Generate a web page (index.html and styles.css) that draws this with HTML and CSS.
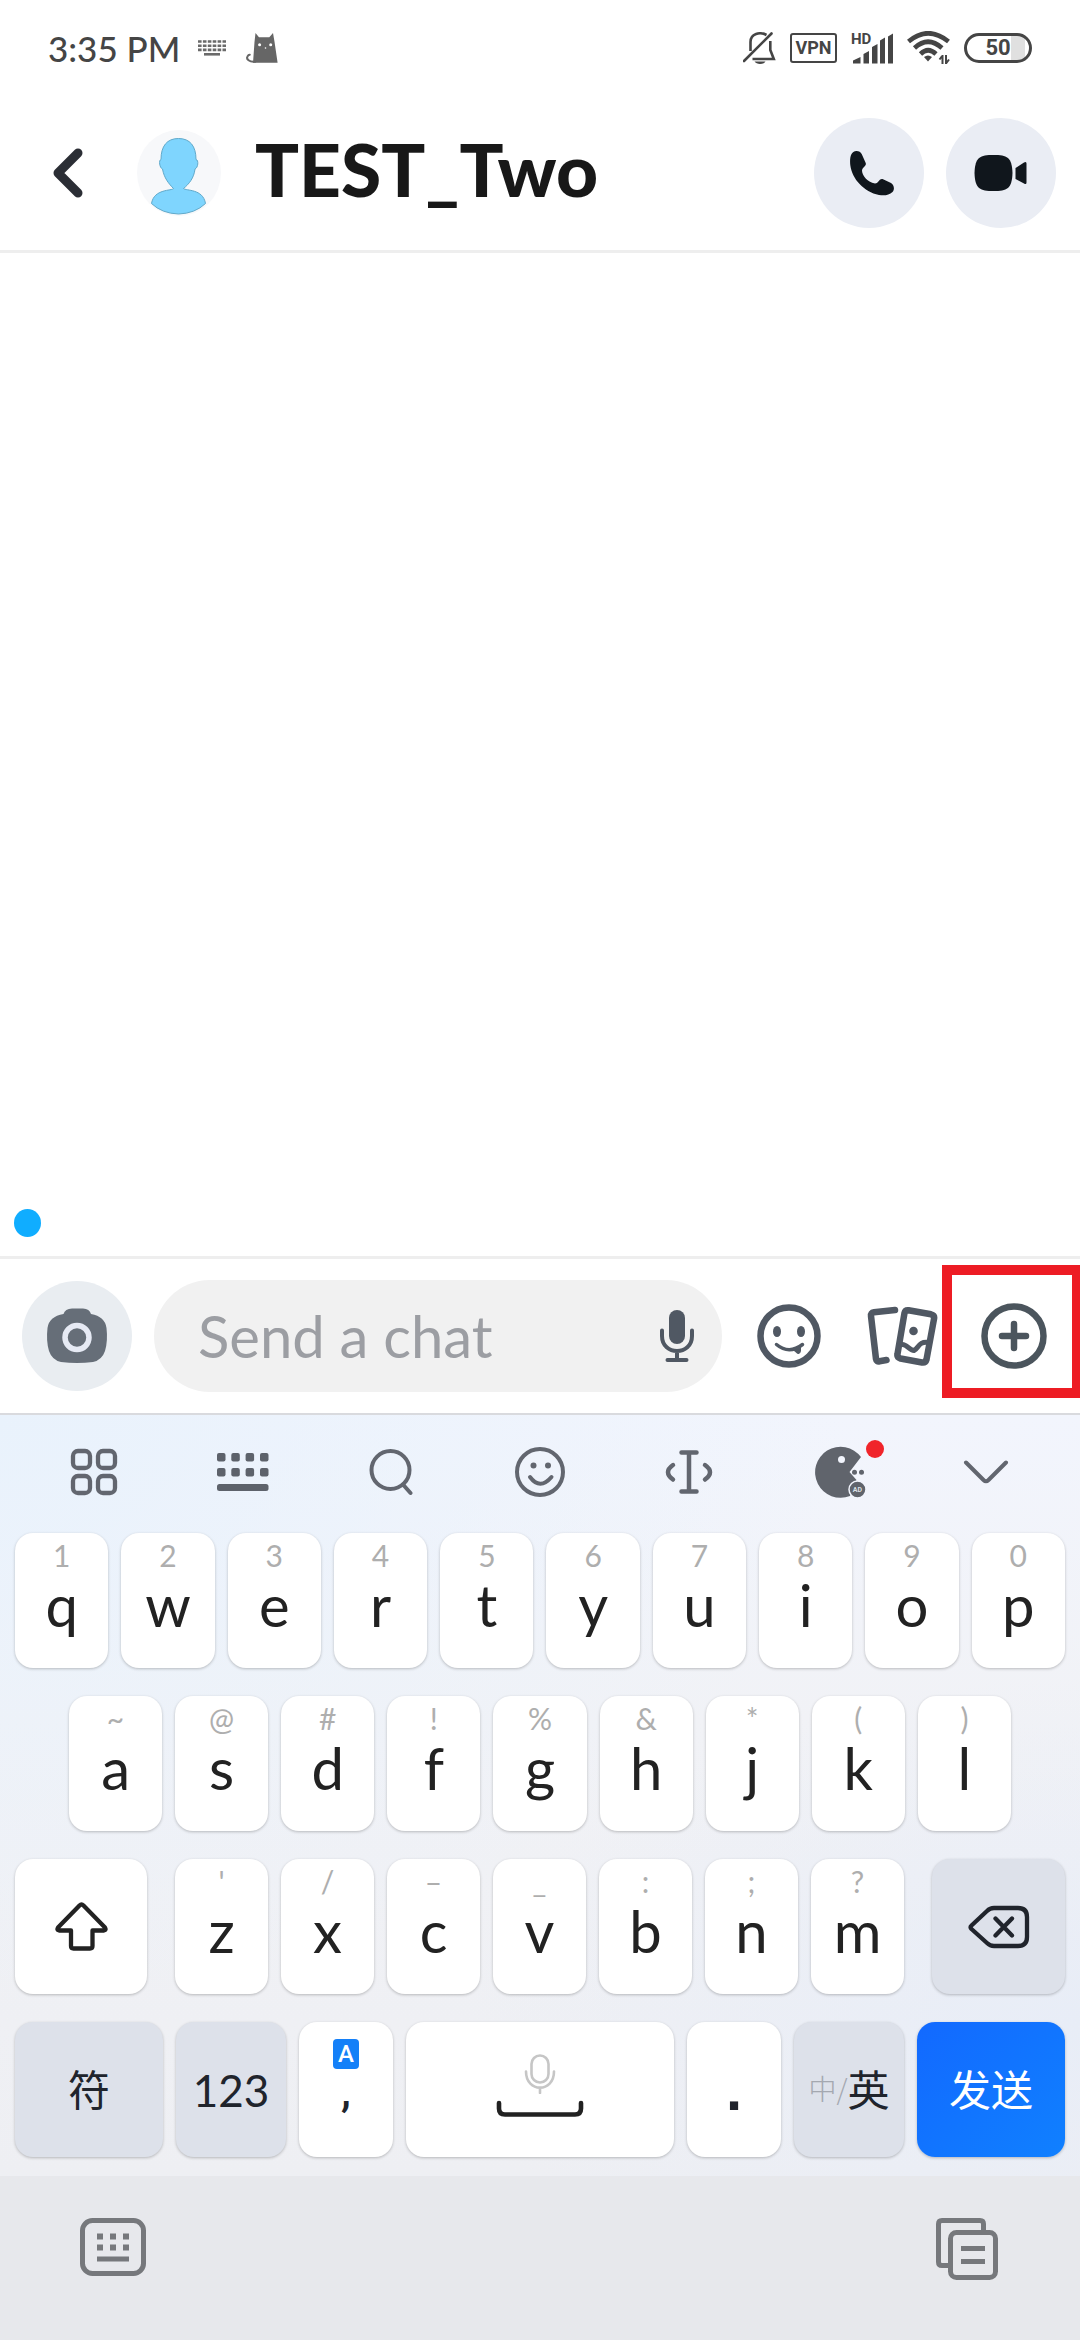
FILE: index.html
```html
<!DOCTYPE html>
<html lang="en">
<head>
<meta charset="utf-8">
<meta name="viewport" content="width=device-width, initial-scale=1">
<title>TEST_Two</title>
<link rel="stylesheet" href="styles.css">
</head>
<body>
<div class="screen">
  <div class="status">
    <span class="status-time">3:35 PM</span>
    <svg class="status-kb" width="28" height="16" viewBox="0 0 28 16" fill="none" stroke="#6a6a6a" stroke-width="2.6"><path d="M0 1.5h28M0 5.7h28M0 9.9h28" stroke-dasharray="3.6 1.3"/><path d="M6 14.3h16"/></svg>
    <svg class="status-cat" width="33" height="31" viewBox="0 0 33 31"><path d="M9.5 0 13 4.3H23.300L27 0l1.500 8.700L31.600 29.700H7L8.500 9z" fill="#666"/><path d="M10 28.500C3 29.500 0 26 1.500 23.500 2.500 21.500 4 21.800 4.500 22" fill="none" stroke="#666" stroke-width="2"/><circle cx="13.600" cy="11.700" r="1.500" fill="#fff"/><circle cx="24.700" cy="11.700" r="1.500" fill="#fff"/><circle cx="19.500" cy="15" r=".8" fill="#fff"/></svg>
    <div class="status-right">
      <svg width="33" height="33" viewBox="0 0 33 33" fill="none" stroke="#454545" stroke-width="2.600"><path d="M1 29 28.500 1.500" stroke-linecap="round"/><path d="M7.500 19V10C7.500 1.500 17-.5 23.500 3M27.300 9v9l3.500 9H9.500"/><path d="M11.500 29.500h11C20.500 32.800 13.500 32.800 11.500 29.500z" fill="#454545" stroke="none"/></svg>
      <span class="vpn">VPN</span>
      <span class="signal"><span class="hd">HD</span>
        <svg width="42" height="31" viewBox="0 0 42 31" fill="#454545"><path d="M2 27.500 9.500 24v6.500H2zM12.500 21 18 18v12.500h-5.500zM21 14l5.500-3v19.500H21zM29 7.500l5-3v26h-5zM37 3.500 42 .5v30h-5z"/></svg>
      </span>
      <svg width="43" height="34" viewBox="0 0 43 34"><g fill="none" stroke="#454545" stroke-width="4.600"><path d="M1.500 10.500Q21-6 41.500 10.500"/><path d="M7.500 17Q21 4.500 35 17"/><path d="M13.500 23Q21 15.500 29 23"/></g><path d="M17 26Q21 23 25 26L21 30.500z" fill="#454545"/><path d="M35.500 24v9M39 33v-9M35.500 24.500l-3 4M39 32.500l3-4" fill="none" stroke="#454545" stroke-width="2"/></svg>
      <span class="battery">50</span>
    </div>
  </div>

  <header class="header">
    <button class="back" aria-label="Back"><svg width="30" height="50" viewBox="0 0 30 50"><path d="M25 5 5 25l20 20" fill="none" stroke="#2b2e35" stroke-width="9" stroke-linecap="round" stroke-linejoin="round"/></svg></button>
    <svg class="avatar" width="84" height="86" viewBox="0 0 84 86"><ellipse cx="42" cy="43" rx="42" ry="43" fill="#f7f8fa"/><path d="M41.500 8.500C30 8.500 24 16 24 29.500 21.500 30 22.500 38 25.500 39 27 48 32 54 36.500 58.500 35 61 17 58.500 14.500 73.500Q25 83.500 41.500 84 58 83.500 68.500 73.500C66 58.500 49 61 46.500 58.500 52 54 57 48 58 39 61 38 62 30 59 29.500 59 16 53 8.500 41.500 8.500z" fill="#7fd5fe" stroke="#60a9ca"/></svg>
    <h1 class="title">TEST_Two</h1>
    <button class="round call" aria-label="Call"><svg width="45" height="45" viewBox="0 0 45 45" fill="#10161c"><path d="M6.500 0C9 0 10.700 1 11.700 3L15.700 12C16.800 15 12.300 16 12 19.500 12 24 17 31 25 32.500 29 32.500 28.500 27.500 32.500 28L41 32C44 34 45 38 42.500 41 39 44.500 34 44.800 29 44 14 41 2 28 .3 14.300-.4 8 .3 0 6.500 0z"/></svg></button>
    <button class="round" aria-label="Video call"><svg width="54" height="38" viewBox="0 0 54 38" fill="#10161c"><path d="M19.500 1C33 1 38 3 38.500 19 38 35 33 37 19.500 37S1 35 .5 19C1 3 6 1 19.500 1z"/><path d="M41.500 14 50 8.500q2.500-1.500 2.500 1v19q0 2.500-2.500 1L41.500 25z"/></svg></button>
  </header>

  <main class="chat"><span class="dot"></span></main>

  <form class="composer">
    <button type="button" class="round camera" aria-label="Camera"><svg width="62" height="56" viewBox="0 0 62 56"><path d="M17.500 6Q19 .8 26 .5H37Q43.500.8 45 6 59 8.500 60.500 20 62 33 59 43 56 52 47 54 31 56 15 54 6 52 3 43 0 33 1.500 20 3 8.500 17.500 6z" fill="#666e78"/><circle cx="31" cy="29.500" r="12" fill="none" stroke="#e6eaf4" stroke-width="5.500"/></svg></button>
    <div class="field">
      <input type="text" placeholder="Send a chat" aria-label="Send a chat">
      <button type="button" class="plain" aria-label="Voice"><svg width="36" height="54" viewBox="0 0 36 54"><rect x="10" y="1" width="16" height="34" rx="8" fill="#505863"/><path d="M3 21.500V27c0 20 30 20 30 0v-5.500M18 42v8.500M8.500 51h19" fill="none" stroke="#505863" stroke-width="4" stroke-linecap="round"/></svg></button>
    </div>
    <button type="button" class="plain" aria-label="Stickers"><svg width="64" height="64" viewBox="0 0 64 64" fill="#505863"><circle cx="32" cy="32" r="28.500" fill="none" stroke="#505863" stroke-width="6.500"/><ellipse cx="20" cy="27.500" rx="4" ry="5.500"/><ellipse cx="44" cy="27.500" rx="4" ry="5.500"/><path d="M19.500 40.500Q32 51 45.500 40.500" fill="none" stroke="#505863" stroke-width="3.500" stroke-linecap="round"/><path d="M36 46 44 42v5q-1 4.500-4 2.500z"/></svg></button>
    <button type="button" class="plain cards" aria-label="Memories"><svg width="72" height="60" viewBox="0 0 72 60" fill="none" stroke="#505863" stroke-width="6.500" stroke-linecap="round" stroke-linejoin="round"><path d="M28 4 7 6.300Q3.500 6.800 4 10L9 53q.5 3 3.500 2.300L19.500 54"/><path d="M41.500 4.300 64 8.300Q67.800 9.300 67 13L59.500 53.500Q58.500 57 55 56.500L33.500 52.500Q29.800 51.500 30.500 48L37.500 7Q38.200 4 41.500 4.300z"/><path d="M35 38.500C40 38 42 44.500 47 44.500 52 42 51 35 62 36.500" stroke-width="5"/><circle cx="46.500" cy="25" r="4.300" fill="#505863" stroke="none"/></svg></button>
    <button type="button" class="plain plus" aria-label="More"><svg width="66" height="66" viewBox="0 0 66 66" fill="none" stroke="#4b555d" stroke-width="6.500" stroke-linecap="round"><circle cx="33" cy="33" r="29.500"/><path d="M33 21v24M21 33h24"/></svg></button>
  </form>

  <section class="keyboard">
    <div class="tools">
      <button class="plain" aria-label="Menu"><svg width="48" height="48" viewBox="0 0 48 48" fill="none" stroke="#62666f" stroke-width="4.300"><rect x="3" y="3" width="17" height="17" rx="5"/><rect x="28" y="3" width="17" height="17" rx="5"/><rect x="3" y="28" width="17" height="17" rx="5"/><rect x="28" y="28" width="17" height="17" rx="5"/></svg></button>
      <button class="plain" aria-label="Layout"><svg width="52" height="38" viewBox="0 0 52 38" fill="#5d626b"><rect width="8.500" height="8.500" rx="2"/><rect x="14.300" width="8.500" height="8.500" rx="2"/><rect x="28.600" width="8.500" height="8.500" rx="2"/><rect x="43" width="8.500" height="8.500" rx="2"/><rect y="15" width="8.500" height="8.500" rx="2"/><rect x="14.300" y="15" width="8.500" height="8.500" rx="2"/><rect x="28.600" y="15" width="8.500" height="8.500" rx="2"/><rect x="43" y="15" width="8.500" height="8.500" rx="2"/><rect y="31" width="51.500" height="7" rx="2.500"/></svg></button>
      <button class="plain" aria-label="Search"><svg width="44" height="48" viewBox="0 0 44 48" fill="none" stroke="#62666f" stroke-width="4" stroke-linecap="round"><circle cx="21.500" cy="22" r="19"/><path d="M34 36.500 41.500 45"/></svg></button>
      <button class="plain" aria-label="Emoji"><svg width="52" height="52" viewBox="0 0 52 52" fill="none" stroke="#62666f" stroke-width="4" stroke-linecap="round"><circle cx="26" cy="26" r="23"/><path d="M16 31q10 13.500 21.500 0"/><circle cx="19.500" cy="19.500" r="3" fill="#62666f" stroke="none"/><circle cx="34" cy="19.500" r="3" fill="#62666f" stroke="none"/></svg></button>
      <button class="plain" aria-label="Move cursor"><svg width="50" height="46" viewBox="0 0 50 46" fill="none" stroke="#62666f" stroke-width="4.500" stroke-linecap="round" stroke-linejoin="round"><path d="M17.500 3.500h15M17.500 42.500h15M25 3.500v39M9 16Q-1 23 9 30.500M41 16Q51 23 41 30.500"/></svg></button>
      <button class="plain game" aria-label="Games"><svg width="52" height="52" viewBox="0 0 52 52"><path d="M35.500 26 47 11A25.500 25.500 0 1 0 36 50L42.500 34z" fill="#60646c"/><circle cx="27.500" cy="13.500" r="3.500" fill="#f2f5fd"/><circle cx="40.500" cy="26.300" r="2.500" fill="#60646c"/><circle cx="47.500" cy="26.300" r="2.500" fill="#60646c"/><circle cx="43.500" cy="43.500" r="8.500" fill="#60646c" stroke="#f2f5fd" stroke-width="1.500"/><text x="43.500" y="46" text-anchor="middle" font-family="Roboto, sans-serif" font-weight="700" font-size="7" fill="#dde0e6">AD</text></svg></button>
      <button class="plain" aria-label="Hide keyboard"><svg width="46" height="24" viewBox="0 0 46 24"><path d="M3 2.500 20.500 20Q23 22.500 25.500 20L43 2.500" fill="none" stroke="#62666f" stroke-width="4" stroke-linecap="round"/></svg></button>
    </div>
    <div class="row">
      <button class="key"><small>1</small>q</button><button class="key"><small>2</small>w</button><button class="key"><small>3</small>e</button><button class="key"><small>4</small>r</button><button class="key"><small>5</small>t</button><button class="key"><small>6</small>y</button><button class="key"><small>7</small>u</button><button class="key"><small>8</small>i</button><button class="key"><small>9</small>o</button><button class="key"><small>0</small>p</button>
    </div>
    <div class="row row-home">
      <button class="key"><small>~</small>a</button><button class="key"><small>@</small>s</button><button class="key"><small>#</small>d</button><button class="key"><small>!</small>f</button><button class="key"><small>%</small>g</button><button class="key"><small>&amp;</small>h</button><button class="key"><small>*</small>j</button><button class="key"><small>(</small>k</button><button class="key"><small>)</small>l</button>
    </div>
    <div class="row">
      <button class="key special shift" aria-label="Shift"><svg width="53" height="49" viewBox="0 0 53 49"><path d="M24.500 3.500q2-2 4 0L50 25.500q1.500 2.500-1 3H37.500V44q0 2.500-2.500 2.500H18.500Q16 46.500 16 44V28.500H4q-2.500-.5-1-3z" fill="none" stroke="#222" stroke-width="4.300" stroke-linejoin="round"/></svg></button>
      <button class="key"><small>'</small>z</button><button class="key"><small>/</small>x</button><button class="key"><small>–</small>c</button><button class="key"><small>_</small>v</button><button class="key"><small>:</small>b</button><button class="key"><small>;</small>n</button><button class="key"><small>?</small>m</button>
      <button class="key special gray delete" aria-label="Delete"><svg width="62" height="44" viewBox="0 0 62 44" fill="none" stroke="#20242c" stroke-width="4.300" stroke-linecap="round" stroke-linejoin="round"><path d="M3.500 20.500 19 6Q22 3 26 3H50Q59 3 59 12V32Q59 41 50 41H26Q22 41 19 38L3.500 24Q1.500 22.300 3.500 20.500zM27.500 13.500 44 30.500M44 13.500 27.500 30.500"/></svg></button>
    </div>
    <div class="row">
      <button class="key special gray wide cjk">符</button>
      <button class="key special gray mid">123</button>
      <button class="key special comma"><span class="badge">A</span>,</button>
      <button class="key special space" aria-label="Space"><svg width="32" height="40" viewBox="0 0 32 40" fill="none" stroke="#c6c6c6" stroke-width="2.600" stroke-linecap="round"><rect x="7.500" y="1.500" width="17" height="27" rx="8.500"/><path d="M2 17.500C2 39 30 39 30 17.500M16 34v5"/></svg><svg width="88" height="20" viewBox="0 0 88 20"><path d="M3 3v5.500q0 6 6 6h70q6 0 6-6V3" fill="none" stroke="#222" stroke-width="4.600" stroke-linecap="round"/></svg></button>
      <button class="key special period">.</button>
      <button class="key special gray mid cjk lang"><span class="alt">中/</span>英</button>
      <button class="key special send wide cjk">发送</button>
    </div>
  </section>

  <nav class="nav">
    <button class="plain" aria-label="Switch keyboard"><svg width="66" height="58" viewBox="0 0 66 58" fill="#76787c"><rect x="2.500" y="2.500" width="61" height="53" rx="10" fill="none" stroke="#76787c" stroke-width="5"/><path d="M17 15.500h6v6h-6zM30 15.500h6v6h-6zM43 15.500h6v6h-6zM17 26.500h6v6h-6zM30 26.500h6v6h-6zM43 26.500h6v6h-6zM17 38.500h32v5H17z"/></svg></button>
    <button class="plain" aria-label="Clipboard"><svg width="62" height="62" viewBox="0 0 62 62" fill="none" stroke="#76787c" stroke-width="5"><path d="M13 47.500H6Q2.500 47.500 2.500 44V6Q2.500 2.500 6 2.500H44Q47.500 2.500 47.500 6V13"/><rect x="14.500" y="14.500" width="45" height="45" rx="6"/><path d="M25 30.500h24M25 43.500h24"/></svg></button>
  </nav>
</div>
</body>
</html>
```

FILE: styles.css
```css
* { box-sizing: border-box; }

body {
  margin: 0;
  background: #fff;
  font-family: Lato, "Noto Sans CJK SC", sans-serif;
  color: #222;
}

button {
  margin: 0;
  padding: 0;
  border: 0;
  background: none;
  font-family: inherit;
  color: inherit;
}

svg { display: block; flex: none; }

.screen {
  display: flex;
  flex-direction: column;
  min-height: 100vh;
}

/* Status bar */
.status {
  display: flex;
  align-items: center;
  height: 96px;
  padding: 0 48px;
  color: #454545;
}
.status-time {
  font-size: 35px;
  font-weight: 500;
  line-height: 40px;
}
.status-kb { margin-left: 18px; }
.status-cat { margin-left: 20px; }
.status-right {
  display: flex;
  align-items: center;
  gap: 14px;
  margin-left: auto;
  font-family: Roboto, sans-serif;
}
.vpn {
  width: 47px;
  border: 2px solid #454545;
  border-radius: 3px;
  font-size: 18px;
  font-weight: 700;
  line-height: 26px;
  text-align: center;
}
.signal { position: relative; }
.hd {
  position: absolute;
  left: 0;
  top: 0;
  font-size: 15px;
  font-weight: 700;
  line-height: 12px;
}
.battery {
  width: 68px;
  border: 3px solid #454545;
  border-radius: 15px;
  background: linear-gradient(90deg, #fff 44px, #e0e0e0 44px, #e0e0e0 58px, #fff 58px);
  font-size: 22px;
  font-weight: 700;
  line-height: 24px;
  text-align: center;
}

/* Chat header */
.header {
  display: flex;
  align-items: center;
  padding: 22px 24px 22px 53px;
  border-bottom: 3px solid #eee;
}
.avatar { margin-left: 54px; }
.title {
  flex: 1;
  margin: 0;
  padding: 0 0 8px 34px;
  font-size: 73px;
  font-weight: 900;
  line-height: 80px;
  color: #181818;
}
.round {
  display: flex;
  align-items: center;
  justify-content: center;
  flex: none;
  width: 110px;
  height: 110px;
  border-radius: 50%;
  background: #eaedf4;
}
.call { padding-left: 6px; }
.header .round + .round { margin-left: 22px; }

/* Conversation */
.chat {
  display: flex;
  flex: 1;
  align-items: flex-end;
  padding: 19px 14px;
}
.dot {
  width: 27px;
  height: 28px;
  border-radius: 50%;
  background: #10adff;
}

/* Composer */
.composer {
  display: flex;
  align-items: center;
  padding-left: 22px;
  border-top: 3px solid #eee;
  height: 157px;
}
.composer .camera { background: #e9edf1; }
.field {
  display: flex;
  align-items: center;
  flex: 1;
  min-width: 0;
  height: 112px;
  margin: 0 35px 0 22px;
  padding: 0 27px 0 44px;
  border-radius: 56px;
  background: #f1f1f1;
}
.field input {
  flex: 1;
  min-width: 0;
  padding: 0;
  border: 0;
  outline: 0;
  background: none;
  font-family: inherit;
  font-size: 58px;
  line-height: 68px;
}
.field input::placeholder { color: #9c9ea3; opacity: 1; }
.plain {
  display: flex;
  align-items: center;
  justify-content: center;
  flex: none;
}
.cards { margin: 0 3px 0 46px; }
.plus {
  width: 138px;
  height: 133px;
  margin-bottom: 9px;
  padding: 8px 0 0 4px;
  border: solid #ed1c24;
  border-width: 10px 8px 10px 10px;
}

/* Keyboard */
.keyboard {
  display: flex;
  flex-direction: column;
  gap: 28px;
  padding: 0 15px 19px;
  border-top: 2px solid #d9dade;
  background:
    radial-gradient(ellipse at 0 0, #e9f2fc 0, #e9f2fc00 55%),
    radial-gradient(ellipse at 100% 80%, #e8edf7 0, #e8edf700 40%),
    linear-gradient(#f2f5fd 0, #f1f2f6 40%, #eeeff3 100%);
}
.tools {
  display: grid;
  grid-template-columns: repeat(7, 1fr);
  height: 90px;
  padding: 25px 5px 0;
}
.tools .plain { height: 64px; }
.tools .game {
  position: relative;
  padding-left: 6px;
}
.game::after {
  content: "";
  position: absolute;
  top: 0;
  left: 103px;
  width: 18px;
  height: 18px;
  border-radius: 50%;
  background: #f0242a;
}
.row { display: flex; gap: 13px; }
.row-home { padding: 0 54px; }
.key {
  display: flex;
  flex-direction: column;
  align-items: center;
  flex: 1 1 0;
  min-width: 0;
  height: 135px;
  padding-top: 7px;
  border-radius: 18px;
  background: #fff;
  box-shadow: 0 1px 3px #0000003d;
  font-size: 58px;
  line-height: 60px;
}
.key small {
  margin-bottom: 5px;
  font-size: 30px;
  line-height: 30px;
  color: #aeaeae;
}
.special {
  flex: none;
  justify-content: center;
  padding: 0;
  color: #20242c;
}
.shift { width: 132px; margin-right: 15px; }
.delete { width: 133px; margin-left: 15px; }
.gray { background: #dde1ea; }
.wide { width: 148px; }
.mid { width: 110px; font-size: 44px; }
.cjk {
  padding-bottom: 4px;
  font-family: "Noto Sans CJK SC", sans-serif;
  font-size: 42px;
}
.comma {
  justify-content: flex-start;
  width: 94px;
  padding-top: 17px;
  font-family: Roboto, sans-serif;
  font-size: 44px;
  font-weight: 500;
  line-height: 44px;
}
.badge {
  width: 26px;
  border-radius: 4px;
  background: #1480f8;
  font-size: 24px;
  line-height: 30px;
  color: #fff;
}
.space {
  flex: 1;
  gap: 6px;
  padding-bottom: 6px;
}
.period {
  width: 94px;
  font-family: "Liberation Sans", sans-serif;
  font-weight: 700;
}
.lang {
  flex-direction: row;
  align-items: center;
}
.alt {
  font-size: 28px;
  font-weight: 300;
  color: #a4a8b0;
}
.send {
  background: linear-gradient(135deg, #1269ff, #1080ff);
  color: #fff;
}

/* System bar under the keyboard */
.nav {
  display: flex;
  align-items: flex-start;
  justify-content: space-between;
  height: 164px;
  padding: 42px 82px 0 80px;
  background: #e7e8ec;
}
```
